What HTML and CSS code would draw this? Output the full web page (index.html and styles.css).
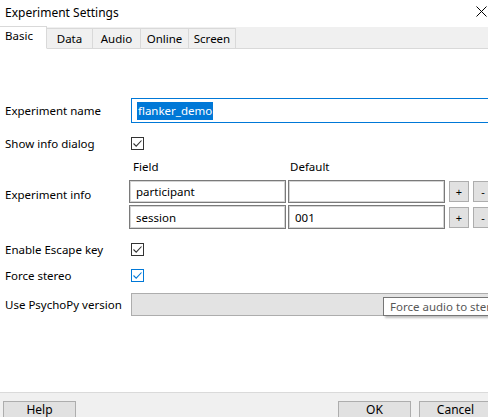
FILE: index.html
```html
<!DOCTYPE html>
<html>
<head>
<meta charset="utf-8">
<link rel="stylesheet" href="styles.css">
</head>
<body>
<div class="dialog">
  <div class="titlebar">
    <span class="title">Experiment Settings</span>
    <svg class="close" width="11" height="11" viewBox="0 0 11 11"><path d="M0.5 0.5 L10.5 10.5 M10.5 0.5 L0.5 10.5" stroke="#000" stroke-width="1" fill="none"/></svg>
  </div>
  <div class="tabs">
    <div class="tab active">Basic</div>
    <div class="tab">Data</div>
    <div class="tab">Audio</div>
    <div class="tab">Online</div>
    <div class="tab">Screen</div>
  </div>
  <div class="panel">
    <div class="row row-name">
      <div class="label">Experiment name</div>
      <div class="input name-input"><span class="sel">flanker_demo</span></div>
    </div>
    <div class="row row-check r-info">
      <div class="label">Show info dialog</div>
      <div class="check"><svg width="11" height="11" viewBox="0 0 11 11"><path d="M1.5 5.5 L4.2 8.2 L9.5 2.5" stroke="#333" stroke-width="1.1" fill="none"/></svg></div>
    </div>
    <div class="info">
      <div class="label info-label">Experiment info</div>
      <div class="info-grid">
        <div class="hdr hdr-field">Field</div>
        <div class="hdr">Default</div>
        <div></div>
        <div class="cell">participant</div>
        <div class="cell"></div>
        <div class="btns"><div class="btn-s">+</div><div class="btn-s">-</div></div>
        <div class="cell">session</div>
        <div class="cell">001</div>
        <div class="btns"><div class="btn-s">+</div><div class="btn-s">-</div></div>
      </div>
    </div>
    <div class="row row-check r-esc">
      <div class="label">Enable Escape key</div>
      <div class="check"><svg width="11" height="11" viewBox="0 0 11 11"><path d="M1.5 5.5 L4.2 8.2 L9.5 2.5" stroke="#333" stroke-width="1.1" fill="none"/></svg></div>
    </div>
    <div class="row row-check r-stereo">
      <div class="label">Force stereo</div>
      <div class="check blue"><svg width="11" height="11" viewBox="0 0 11 11"><path d="M1.5 5.5 L4.2 8.2 L9.5 2.5" stroke="#0078d7" stroke-width="1.1" fill="none"/></svg></div>
    </div>
    <div class="row row-version">
      <div class="label">Use PsychoPy version</div>
      <div class="combo"></div>
      <div class="tooltip">Force audio to stereo (2-channel) output</div>
    </div>
  </div>
  <div class="footer">
    <div class="btn help">Help</div>
    <div class="spacer"></div>
    <div class="btn">OK</div>
    <div class="btn">Cancel</div>
  </div>
</div>
</body>
</html>
```
FILE: styles.css
```css
html, body {
  margin: 0;
  padding: 0;
  width: 488px;
  height: 417px;
  overflow: hidden;
  background: #fff;
}
.dialog {
  width: 520px;
  height: 417px;
  display: flex;
  flex-direction: column;
  font-family: "Noto Sans", "Open Sans", sans-serif;
  font-size: 11.5px;
  color: #000;
}
.titlebar {
  height: 27px;
  display: flex;
  align-items: center;
  position: relative;
  padding-left: 5px;
  box-sizing: border-box;
}
.title {
  font-size: 12px;
  margin-top: -3px;
}
.close {
  position: absolute;
  left: 476px;
  top: 6px;
}
.tabs {
  height: 22px;
  background: #f0f0f0;
  border-bottom: 1px solid #d9d9d9;
  display: flex;
  align-items: flex-end;
  box-sizing: border-box;
}
.tab {
  box-sizing: border-box;
  border: 1px solid #d9d9d9;
  border-left: none;
  border-bottom: none;
  padding: 0 6px 1px;
  display: flex;
  align-items: center;
  justify-content: center;
  margin-bottom: -1px;
  height: 21px;
}
.tab:nth-child(2) { width: 46px; }
.tab:nth-child(3) { width: 48px; }
.tab:nth-child(4) { width: 48px; }
.tab:nth-child(5) { width: 47px; }
.tab.active {
  width: 47px;
  height: 23px;
  background: #fff;
  border: 1px solid #d9d9d9;
  border-left: none;
  border-bottom: 1px solid #fff;
  justify-content: flex-start;
  padding: 0 0 5px 5px;
}
.panel {
  flex: 1;
  position: relative;
  padding-left: 5px;
}
.row {
  display: flex;
  align-items: center;
}
.label {
  width: 126px;
  flex: none;
}
.row-name {
  margin-top: 49px;
  height: 25px;
}
.name-input {
  flex: 1;
  height: 25px;
  box-sizing: border-box;
  border: 1px solid #0078d7;
  display: flex;
  align-items: center;
  padding-left: 5px;
}
.sel {
  background: #0078d7;
  color: #fff;
  font-size: 11.5px;
  line-height: 18px;
  padding: 0 1px;
}
.check {
  width: 13px;
  height: 13px;
  box-sizing: border-box;
  border: 1px solid #333;
  display: flex;
  align-items: center;
  justify-content: center;
}
.check.blue { border-color: #0078d7; }
.r-info { margin-top: 8px; height: 25px; }
.info {
  display: flex;
  align-items: center;
  margin-top: 3px;
}
.info-grid {
  display: grid;
  grid-template-columns: 157px 157px auto;
  grid-template-rows: 19px 23px 24px;
  row-gap: 2px;
  column-gap: 2px;
  margin-left: -2px;
}
.hdr {
  padding-left: 2px;
  align-self: start;
}
.hdr-field { padding-left: 4px; }
.cell {
  box-sizing: border-box;
  border: 1px solid #7a7a7a;
  box-shadow: inset 0 0 0 1px #d4d4d4;
  padding-left: 6px;
  display: flex;
  align-items: center;
}
.btns {
  display: flex;
  gap: 4px;
  align-items: center;
  padding-left: 2px;
}
.btn-s {
  width: 20px;
  height: 21px;
  box-sizing: border-box;
  background: #e1e1e1;
  border: 1px solid #adadad;
  display: flex;
  align-items: center;
  justify-content: center;
  font-size: 11px;
}
.r-esc { margin-top: 11px; height: 18px; }
.r-stereo { margin-top: 8px; height: 18px; }
.row-version {
  margin-top: 9px;
  height: 23px;
}
.combo {
  flex: 1;
  height: 23px;
  box-sizing: border-box;
  background: #e3e3e3;
  border: 1px solid #adadad;
}
.tooltip {
  position: absolute;
  left: 383px;
  top: 248px;
  height: 19px;
  box-sizing: border-box;
  border: 1px solid #767676;
  background: #fff;
  color: #575757;
  padding: 0 6px;
  white-space: nowrap;
  display: flex;
  align-items: center;
  box-shadow: 2px 2px 2px rgba(0,0,0,0.25);
}
.footer {
  height: 25px;
  background: #f0f0f0;
  border-top: 1px solid #dadada;
  box-sizing: border-box;
  display: flex;
  padding: 8px 28px 0 3px;
  gap: 8px;
}
.spacer { flex: 1; }
.btn {
  width: 73px;
  height: 23px;
  flex: none;
  box-sizing: border-box;
  background: #e1e1e1;
  border: 1px solid #adadad;
  display: flex;
  justify-content: center;
  padding-top: 0;
  line-height: 15px;
  font-size: 12px;
}
```
